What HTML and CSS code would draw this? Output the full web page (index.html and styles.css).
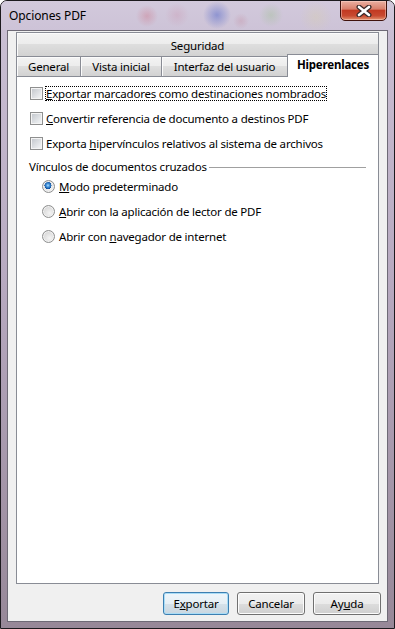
FILE: index.html
```html
<!DOCTYPE html>
<html lang="es">
<head>
    <meta charset="UTF-8">
    <title>Opciones PDF</title>
    <link rel="stylesheet" href="styles.css">
</head>
<body>
    <div class="window">
        <div class="titlebar">
            <span class="title">Opciones PDF</span>
            <button class="close" title="Cerrar">
                <svg width="16" height="12" viewBox="0 0 16 12">
                    <path d="M3 2 L13 10 M13 2 L3 10" stroke="#3b2a2a" stroke-width="5" stroke-linecap="round"/>
                    <path d="M3 2 L13 10 M13 2 L3 10" stroke="#ffffff" stroke-width="2.6" stroke-linecap="round"/>
                </svg>
            </button>
        </div>

        <div class="client">
            <div class="tabs">
                <div class="tab-back">Seguridad</div>
                <div class="tab-row">
                    <div class="tab tab-general">General</div>
                    <div class="tab tab-vista">Vista inicial</div>
                    <div class="tab tab-interfaz">Interfaz del usuario</div>
                    <div class="tab tab-active">Hiperenlaces</div>
                </div>
            </div>

            <div class="panel">
                <div class="checks">
                    <label class="opt"><span class="check"></span><span class="text focus"><u>E</u>xportar marcadores como destinaciones nombrados</span></label>
                    <label class="opt"><span class="check"></span><span class="text"><u>C</u>onvertir referencia de documento a destinos PDF</span></label>
                    <label class="opt"><span class="check"></span><span class="text">Exporta <u>h</u>ipervínculos relativos al sistema de archivos</span></label>
                </div>

                <div class="group-title">
                    <span>Vínculos de documentos cruzados</span>
                    <span class="rule"></span>
                </div>

                <div class="radios">
                    <label class="opt"><span class="radio selected"></span><span class="text"><u>M</u>odo predeterminado</span></label>
                    <label class="opt"><span class="radio"></span><span class="text"><u>A</u>brir con la aplicación de lector de PDF</span></label>
                    <label class="opt"><span class="radio"></span><span class="text">Abrir con <u>n</u>avegador de internet</span></label>
                </div>
            </div>

            <div class="buttons">
                <button class="btn btn-default">E<u>x</u>portar</button>
                <button class="btn">Cancelar</button>
                <button class="btn">Ay<u>u</u>da</button>
            </div>
        </div>
    </div>
</body>
</html>
```

FILE: styles.css
```css
body {
    margin: 0;
    font-family: "Noto Sans", "Open Sans", sans-serif;
    font-size: 11.5px;
    letter-spacing: -0.2px;
    color: #000;
}
.window {
    width: 395px;
    height: 629px;
    box-sizing: border-box;
    border: 1px solid #1c1a1e;
    border-radius: 7px 7px 0 0;
    overflow: hidden;
    display: flex;
    flex-direction: column;
    background: linear-gradient(#cbc1d5, #b7a9c0 45%, #978898);
}
.titlebar {
    height: 29px;
    flex: none;
    display: flex;
    justify-content: space-between;
    align-items: flex-start;
    padding: 0 7px 0 8px;
    background:
        radial-gradient(circle at 146px 15px, rgba(205, 90, 110, 0.3), transparent 11px),
        radial-gradient(circle at 176px 14px, rgba(200, 120, 150, 0.22), transparent 12px),
        radial-gradient(circle at 216px 14px, rgba(80, 100, 200, 0.5), transparent 14px),
        radial-gradient(circle at 240px 20px, rgba(190, 110, 130, 0.22), transparent 8px),
        radial-gradient(circle at 270px 14px, rgba(140, 190, 120, 0.28), transparent 12px),
        radial-gradient(circle at 315px 16px, rgba(220, 210, 150, 0.25), transparent 16px),
        linear-gradient(#d2c9dc, #cdc3d7);
}
.title {
    margin-top: 6px;
    line-height: 17px;
    font-size: 12px;
    letter-spacing: -0.1px;
}
.close {
    width: 47px;
    height: 21px;
    margin-top: -1px;
    padding: 0;
    border: 1px solid #40120c;
    border-radius: 0 0 5px 5px;
    background: linear-gradient(#eab0a2, #d9806c 42%, #c23a22 50%, #c84a30 78%, #e4926f);
    box-shadow: inset 0 0 0 1px rgba(255, 220, 210, 0.45);
    display: flex;
    align-items: center;
    justify-content: center;
}
.client {
    flex: 1;
    margin: 0 6px 6px;
    border: 1px solid #6e6a76;
    background: #f0f0f0;
    display: flex;
    flex-direction: column;
    padding: 1px 0 6px;
}
.tabs {
    margin: 0 8px;
    display: flex;
    flex-direction: column;
}
.tab-back {
    height: 20px;
    padding-top: 3px;
    line-height: 20px;
    text-align: center;
    border: 1px solid #898c95;
    border-bottom: none;
    background: linear-gradient(#f3f3f3, #ececec 50%, #dedede 50%, #d2d2d2);
    box-shadow: inset 1px 1px 0 #fbfbfb;
}
.tab-row {
    height: 23px;
    margin: -2px 0 -1px;
    display: flex;
    align-items: flex-end;
}
.tab {
    height: 19px;
    line-height: 19px;
    margin-bottom: 1px;
    text-align: center;
    border-top: 1px solid #898c95;
    border-left: 1px solid #898c95;
    background: linear-gradient(#f3f3f3, #ececec 50%, #dedede 50%, #d2d2d2);
    box-shadow: inset 1px 1px 0 #fbfbfb;
}
.tab-general { width: 63px; }
.tab-vista { width: 80px; }
.tab-interfaz { width: 125px; }
.tab-active {
    position: relative;
    z-index: 1;
    width: 90px;
    height: 20px;
    margin-bottom: 0;
    padding-bottom: 2px;
    line-height: 20px;
    font-weight: bold;
    border-right: 1px solid #898c95;
    background: #fff;
    box-shadow: none;
}
.panel {
    flex: 1;
    margin: 0 8px;
    border: 1px solid #898c95;
    background: #fff;
    padding: 8px 12px 0;
}
.checks {
    display: flex;
    flex-direction: column;
    gap: 8px;
    margin-left: 1px;
}
.opt {
    height: 17px;
    display: flex;
    align-items: center;
}
.check {
    width: 13px;
    height: 13px;
    box-sizing: border-box;
    margin-right: 2px;
    border: 1px solid #8e8f8f;
    background: linear-gradient(135deg, #c0c4ca, #eceef0 80%);
    box-shadow: inset 0 0 0 1px #f4f4f4;
    flex: none;
}
.text {
    line-height: 13px;
    border: 1px dotted transparent;
    white-space: nowrap;
}
.focus {
    border-color: #000;
}
.group-title {
    margin-top: 7px;
    line-height: 16px;
    display: flex;
    align-items: center;
    gap: 2px;
}
.rule {
    flex: 1;
    height: 1px;
    background: #a0a0a0;
}
.radios {
    margin-top: 3px;
    padding-left: 13px;
    display: flex;
    flex-direction: column;
    gap: 8px;
}
.radio {
    width: 13px;
    height: 13px;
    box-sizing: border-box;
    margin-right: 3px;
    border-radius: 50%;
    border: 1px solid #8e8f8f;
    background: radial-gradient(circle at 60% 65%, #f4f4f4, #dcdcdc 60%, #c8c8c8);
    box-shadow: inset 0 0 0 1px #f2f2f2;
    flex: none;
}
.radio.selected {
    background:
        radial-gradient(circle at 45% 40%, #b8e0fb 0, #4a9ae0 1.5px, #0f4f9e 3.5px, transparent 3.6px),
        radial-gradient(circle at 60% 65%, #f4f4f4, #dcdcdc 60%, #c8c8c8);
}
.buttons {
    margin-top: 8px;
    padding-right: 6px;
    display: flex;
    justify-content: flex-end;
    gap: 8px;
}
.btn {
    width: 68px;
    height: 23px;
    padding: 0;
    font-family: inherit;
    font-size: 11.5px;
    letter-spacing: -0.2px;
    color: #000;
    border: 1px solid #707070;
    border-radius: 3px;
    background: linear-gradient(#f2f2f2, #ebebeb 50%, #dddddd 50%, #cfcfcf);
    box-shadow: inset 0 0 0 1px #fcfcfc;
}
.btn-default {
    width: 66px;
    border-color: #3c7fb1;
    background: linear-gradient(#eef6fb, #e6eff5 50%, #d6e2ea 50%, #c9d6e0);
    box-shadow: inset 0 0 0 1px #a9dcf6;
}
```
